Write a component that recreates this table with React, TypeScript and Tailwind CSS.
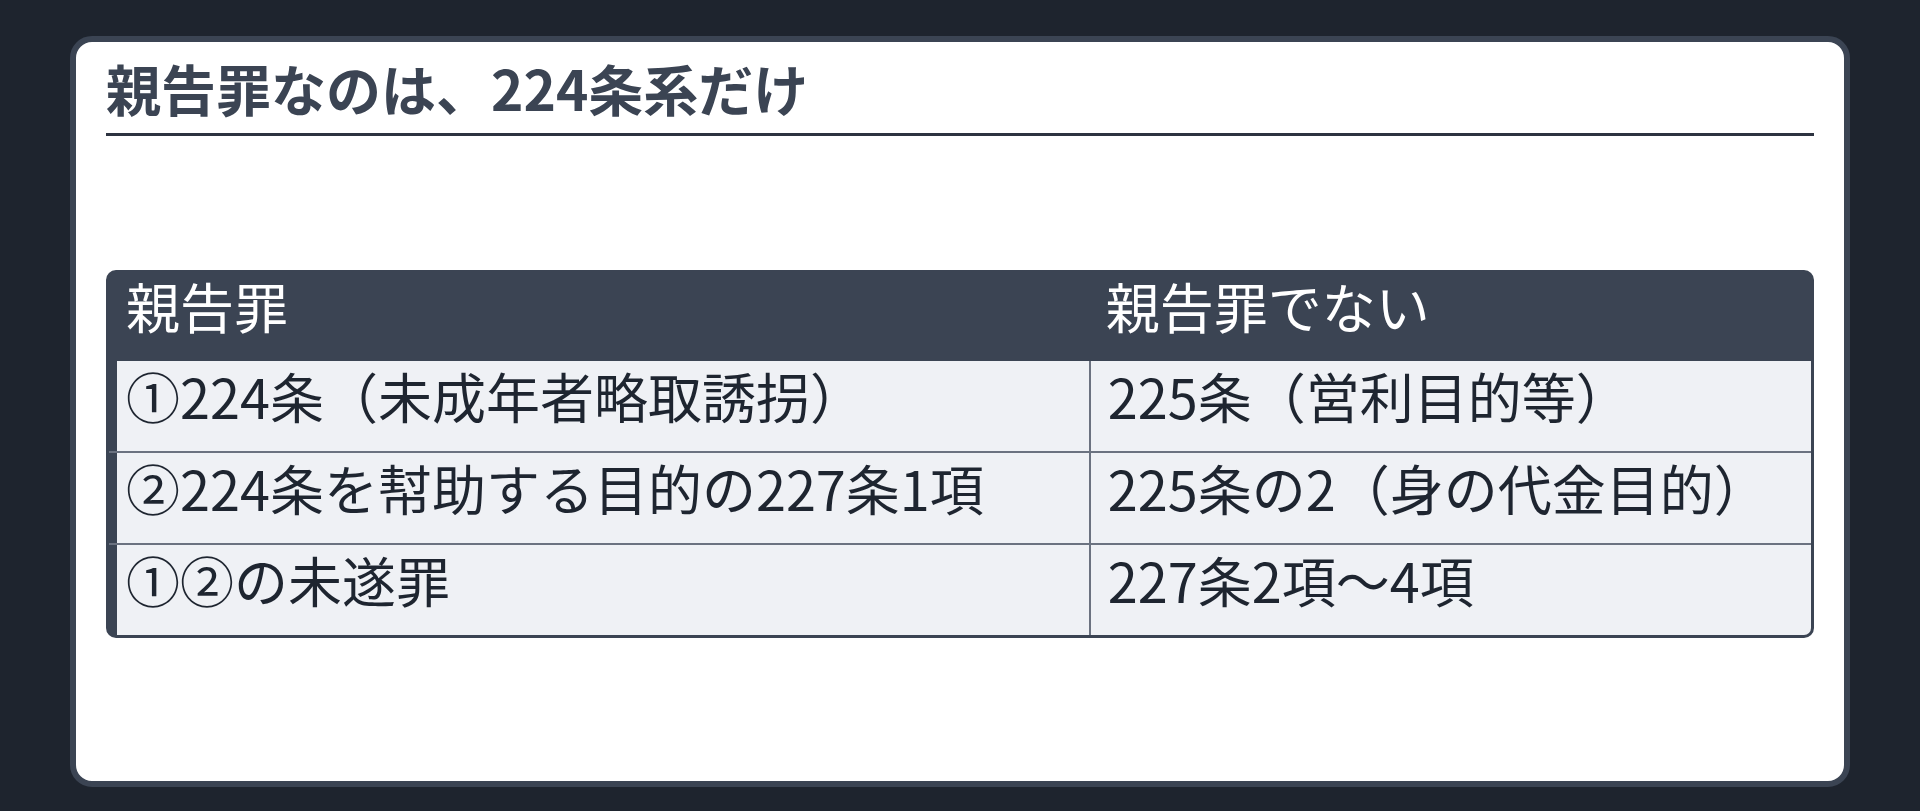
const rows: [string, string][] = [
  ['①224条（未成年者略取誘拐）', '225条（営利目的等）'],
  ['②224条を幇助する目的の227条1項', '225条の2（身の代金目的）'],
  ['①②の未遂罪', '227条2項〜4項'],
];

export default function App() {
  return (
    <div
      className="h-[811px] bg-[#1e242e] pt-[36px] pb-[24px] px-[70px]"
      style={{ fontFamily: '"Noto Sans CJK JP", "Noto Sans", sans-serif' }}
    >
      <div className="h-full flex flex-col bg-white border-[6px] border-[#3b4453] rounded-[22px] px-[30px]">
        <h1 className="mt-[10px] pb-[11px] border-b-[3px] border-[#2d3340] text-[55px] leading-[70px] font-bold text-[#3b4453]">
          親告罪なのは、224条系だけ
        </h1>

        <div className="flex-1 flex items-center pb-[10px]">
          <div className="w-full rounded-[10px] border-[3px] border-[#3b4453] bg-[#3b4453]">
            <div className="grid grid-cols-[981fr_723fr] rounded-t-[7px] bg-[#3b4453] text-white text-[54px] leading-[66px]">
              <div className="h-[88px] pl-[17px]">親告罪</div>
              <div className="h-[88px] pl-[17px]">親告罪でない</div>
            </div>
            {rows.map(([a, b], i) => (
              <div
                key={i}
                className={`grid grid-cols-[981fr_723fr] bg-[#eff1f5] text-[#1e2530] text-[54px] leading-[68px] ${
                  i > 0 ? 'border-t-2 border-[#6b7280]' : ''
                } ${i === rows.length - 1 ? 'rounded-b-[7px]' : ''}`}
              >
                <div className="h-[90px] border-l-[8px] border-[#3b4453] pl-[9px] pt-[1px] whitespace-nowrap">
                  {a}
                </div>
                <div className="h-[90px] border-l-2 border-[#6b7280] pl-[17px] pt-[1px] whitespace-nowrap">
                  {b}
                </div>
              </div>
            ))}
          </div>
        </div>
      </div>
    </div>
  );
}
